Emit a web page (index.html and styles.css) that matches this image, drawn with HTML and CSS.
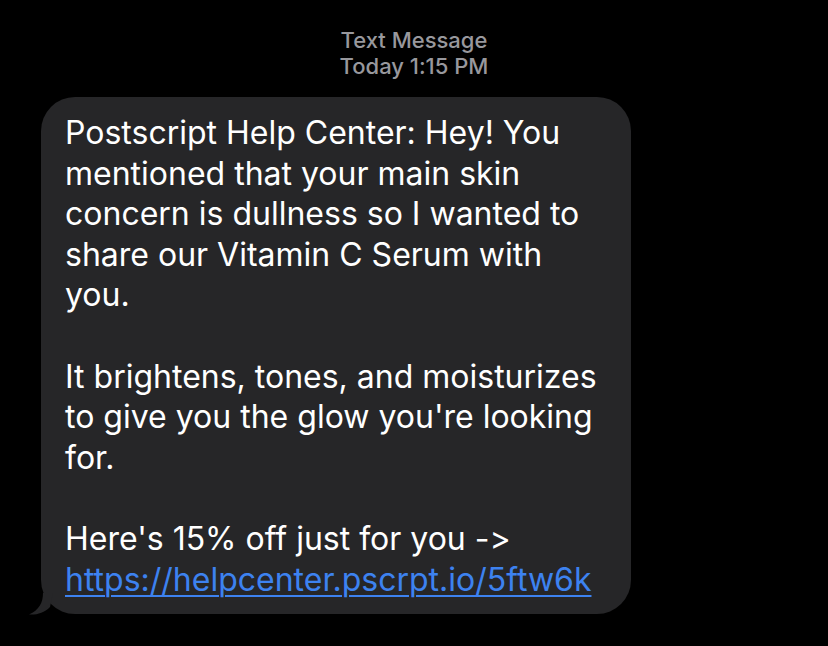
FILE: index.html
```html
<!DOCTYPE html>
<html lang="en">
<head>
  <meta charset="UTF-8" />
  <title>Text Message</title>
  <link rel="stylesheet" href="styles.css">
</head>
<body>
  <div class="thread">
    <div class="stamp">
      <div>Text Message</div>
      <div>Today 1:15 PM</div>
    </div>

    <div class="bubble">
      <p>Postscript Help Center: Hey! You<br>mentioned that your main skin<br>concern is dullness so I wanted to<br>share our Vitamin C Serum with<br>you.</p>
      <p>It brightens, tones, and moisturizes<br>to give you the glow you're looking<br>for.</p>
      <p>Here's 15% off just for you -&gt;<br><a href="#">https://helpcenter.pscrpt.io/5ftw6k</a></p>
      <!-- little tail at the bottom left -->
      <svg class="tail" width="24" height="22" viewBox="0 0 24 22">
        <path d="M14 0 C14 10 10 17 0 21.5 C8 22 15 20 21 14 L24 0 Z" fill="#262628"/>
      </svg>
    </div>
  </div>
</body>
</html>
```

FILE: styles.css
```css
* {
  box-sizing: border-box;
}
body {
  margin: 0;
  background: #000;
  font-family: Inter, 'Noto Sans', sans-serif;
  font-feature-settings: "calt" 0;
  min-height: 100vh;
}

.thread {
  padding: 27px 0 0 41px;
  width: 631px;
}

.stamp {
  text-align: center;
  color: #98989d;
  font-size: 22px;
  line-height: 26px;
  font-weight: 500;
  margin-left: -41px;
  width: 828px;
  margin-bottom: 18px;
}

.bubble {
  position: relative;
  background: #262628;
  border-radius: 34px;
  padding: 16px 20px 14px 24px;
  color: #fff;
  font-size: 32px;
  line-height: 40.6px;
}

.bubble p {
  margin: 0 0 40.6px;
  white-space: nowrap;
}
.bubble p:last-of-type {
  margin-bottom: 0;
}

.bubble a {
  color: #3d82f0;
  text-decoration: underline;
  text-decoration-thickness: 2px;
  text-underline-offset: 4px;
}

.tail {
  position: absolute;
  left: -12px;
  bottom: -1px;
}
```
